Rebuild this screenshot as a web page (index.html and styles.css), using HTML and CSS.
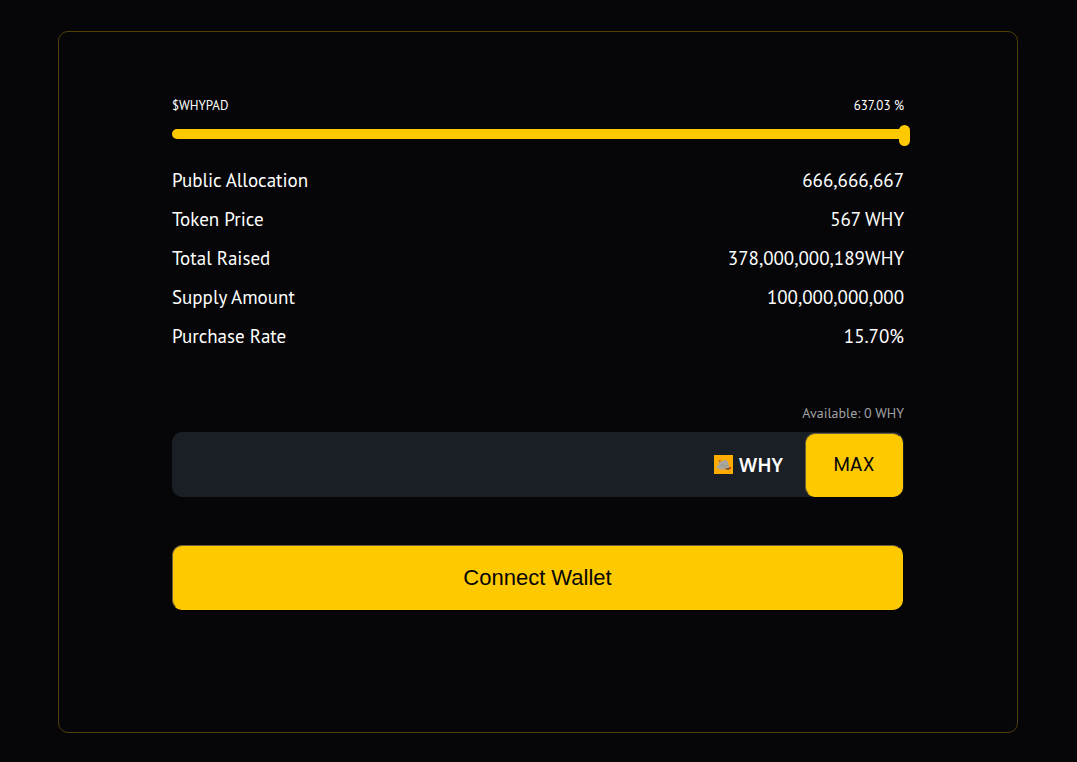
FILE: index.html
```html
<!DOCTYPE html>
<html lang="en">
    <head>
        <meta charset="utf-8" />
        <meta name="viewport" content="width=device-width, initial-scale=1" />
        <title>$WHYPAD</title>
        <link rel="stylesheet" href="styles.css">
    </head>
    <body>
        <main class="card">
            <div class="progress_head">
                <label for="progress">$WHYPAD</label>
                <span>637.03 %</span>
            </div>
            <input class="progress" id="progress" type="range" min="0" max="100" value="100">

            <dl class="info">
                <div class="info_row">
                    <dt>Public Allocation</dt>
                    <dd>666,666,667</dd>
                </div>
                <div class="info_row">
                    <dt>Token Price</dt>
                    <dd>567 WHY</dd>
                </div>
                <div class="info_row">
                    <dt>Total Raised</dt>
                    <dd>378,000,000,189WHY</dd>
                </div>
                <div class="info_row">
                    <dt>Supply Amount</dt>
                    <dd>100,000,000,000</dd>
                </div>
                <div class="info_row">
                    <dt>Purchase Rate</dt>
                    <dd>15.70%</dd>
                </div>
            </dl>

            <form>
                <div class="available">Available: 0 WHY</div>
                <div class="amount">
                    <input class="amount_input" id="amount" type="text" inputmode="decimal">
                    <label class="token" for="amount">
                        <svg class="token_icon" viewBox="0 0 19 19" aria-hidden="true">
                            <rect width="19" height="19" fill="#ffab00"/>
                            <path d="M2.500 13 L3 11 L5 10 L4.500 7.500 L6 6 L8 6.500 L10 5 L12.500 5 L14 7 L15 11 L16 13 L13 14.500 L6 14.500 Z" fill="#a8a59c"/>
                            <path d="M6 10.500 L9 9.500 L11 11 L14 11" fill="none" stroke="#96948b" stroke-width="0.700"/>
                            <path d="M5 5h1.500v2h-1.500z M11 13h2v1.500h-2z" fill="#c8632b"/>
                            <path d="M15 12h2v2h-2z" fill="#c73e22"/>
                            <path d="M13 13h2v2h-2z" fill="#6b5a2c"/>
                        </svg>
                        WHY
                    </label>
                    <button class="btn btn_max" type="button">MAX</button>
                </div>
                <button class="btn btn_connect" type="button">Connect Wallet</button>
            </form>
        </main>
    </body>
</html>
```
FILE: styles.css
```css
*{
    box-sizing: border-box;
}
body{
    margin: 0;
    padding: 31px 59px 29px 58px;
    background-color: #060608;
    color: #fff;
    font-family: "PT Sans", Lato, "Noto Sans", sans-serif;
}
.card{
    padding: 64px 113px 122px;
    border: 1px solid #503f06;
    border-radius: 10px;
}

.progress_head{
    display: flex;
    justify-content: space-between;
    font-size: 13px;
    line-height: 20px;
}
/*the thumb hangs 6px over the right end*/
.progress{
    -webkit-appearance: none;
    appearance: none;
    display: block;
    width: calc(100% + 6px);
    height: 22px;
    margin: 7px 0 0;
    background: none;
}
.progress::-webkit-slider-runnable-track{
    height: 10px;
    border-radius: 5px;
    background-color: #ffc900;
}
.progress::-webkit-slider-thumb{
    -webkit-appearance: none;
    width: 11px;
    height: 21px;
    margin-top: -4px;
    border-radius: 6px;
    background-color: #ffc900;
}

.info{
    margin: 16px 0 0;
    font-size: 19px;
    line-height: 39px;
}
.info_row{
    display: flex;
    justify-content: space-between;
}
.info_row dd{
    margin: 0;
}

.available{
    margin-top: 47px;
    color: #a0a1a3;
    font-size: 14px;
    line-height: 20px;
    text-align: right;
}
.amount{
    display: flex;
    align-items: center;
    height: 65px;
    margin-top: 9px;
    padding-right: 1px;
    border-radius: 10px;
    background-color: #1a1e25;
}
.amount_input{
    flex: 1;
    min-width: 0;
    height: 100%;
    padding: 0 20px;
    border: 0;
    outline: 0;
    background: none;
    color: #fff;
    font: inherit;
    font-size: 20px;
}
.token{
    display: flex;
    align-items: center;
    gap: 6px;
    margin-right: 22px;
    font-family: "Noto Sans", sans-serif;
    font-size: 19px;
    font-weight: 600;
}
.token_icon{
    width: 19px;
    height: 19px;
}

.btn{
    border: 1px solid #ffc900;
    border-top-color: #6b5f3a;
    border-left-color: #6b5f3a;
    border-radius: 10px;
    background-color: #ffc900;
    color: #060608;
    cursor: pointer;
}
.btn_max{
    width: 98px;
    height: 64px;
    font-family: Poppins, Inter, sans-serif;
    font-size: 19px;
    font-weight: 400;
}
.btn_connect{
    width: calc(100% - 1px);
    height: 65px;
    margin-top: 48px;
    font-family: "Liberation Sans", Arial, sans-serif;
    font-size: 22px;
}
```
